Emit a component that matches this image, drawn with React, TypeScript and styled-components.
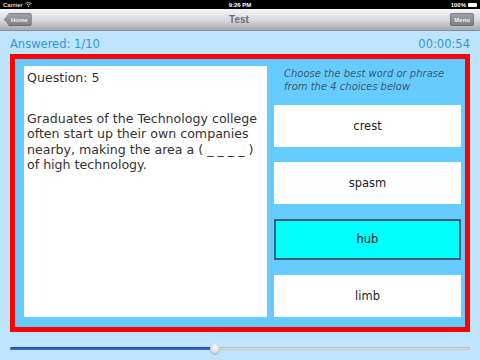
import React from "react";
import styled, { createGlobalStyle } from "styled-components";

const Global = createGlobalStyle`
  html, body { margin: 0; padding: 0; }
  body {
    width: 480px;
    height: 360px;
    overflow: hidden;
    background: #bee5fd;
    font-family: "DejaVu Sans", "Open Sans", sans-serif;
  }
`;

const Screen = styled.div`
  width: 480px;
  height: 360px;
  display: flex;
  flex-direction: column;
  background: #bee5fd;
`;

const StatusBar = styled.div`
  height: 9px;
  background: #000;
  color: #fff;
  font-family: "Liberation Sans", Arial, sans-serif;
  font-size: 6px;
  font-weight: bold;
  display: grid;
  grid-template-columns: 1fr auto 1fr;
  align-items: center;
  padding: 0 3px;
`;

const StatusLeft = styled.div`
  display: flex;
  align-items: center;
  gap: 2px;
  color: #ddd;
`;

const StatusRight = styled.div`
  display: flex;
  justify-content: flex-end;
  align-items: center;
  gap: 2px;
`;

const Battery = styled.span`
  width: 9px;
  height: 4px;
  background: #fff;
  border-radius: 1px;
`;

const NavBar = styled.div`
  height: 21px;
  background: linear-gradient(#f7f7f8, #d6d7db 55%, #a5a8af);
  border-bottom: 1px solid #8a8d94;
  display: grid;
  grid-template-columns: 1fr auto 1fr;
  align-items: center;
  padding: 0 6px 0 4px;
`;

const Title = styled.div`
  font-family: "Liberation Sans", Arial, sans-serif;
  font-size: 10px;
  font-weight: bold;
  color: #6d6f75;
`;

const NavButton = styled.div<{ $back?: boolean }>`
  justify-self: ${(p) => (p.$back ? "start" : "end")};
  height: 13px;
  padding: ${(p) => (p.$back ? "0 4px 0 7px" : "0 4px")};
  display: flex;
  align-items: center;
  font-family: "Liberation Sans", Arial, sans-serif;
  font-size: 6px;
  font-weight: bold;
  color: #f2f2f2;
  background: linear-gradient(#a3a5aa, #7b7e84);
  border-radius: 3px;
  box-shadow: inset 0 0 0 0.5px #5c5f65;
  clip-path: ${(p) =>
    p.$back ? "polygon(5px 0, 100% 0, 100% 100%, 5px 100%, 0 50%)" : "none"};
`;

const InfoRow = styled.div`
  height: 23px;
  padding: 0 10px 3px;
  display: flex;
  justify-content: space-between;
  align-items: flex-end;
  font-family: "DejaVu Sans", sans-serif;
  font-size: 11.5px;
  color: #3092e6;
  box-sizing: border-box;
`;

const Frame = styled.div`
  margin: 0 10px;
  height: 278px;
  box-sizing: border-box;
  border: 5px solid #ff0000;
  background: #66ccff;
  padding: 7px 4px 10px 9px;
  display: grid;
  grid-template-columns: 243px 1fr;
  gap: 7px;
  min-height: 0;
`;

const QuestionCard = styled.div`
  background: #fff;
  padding: 4px 3px;
  color: #333;
  font-size: 12.6px;
  line-height: 15.5px;
  min-height: 0;
`;

const QuestionNo = styled.div`
  margin-bottom: 25px;
`;

const Answers = styled.div`
  display: grid;
  grid-template-rows: 24px repeat(4, 1fr);
  row-gap: 15px;
  min-height: 0;
`;

const Instruction = styled.div`
  font-style: italic;
  font-size: 10px;
  line-height: 13px;
  color: #3d5a70;
  padding: 1px 0 0 10px;
`;

const Choice = styled.div<{ $selected?: boolean }>`
  box-sizing: border-box;
  display: flex;
  align-items: center;
  justify-content: center;
  background: ${(p) => (p.$selected ? "#00ffff" : "#fff")};
  border: ${(p) => (p.$selected ? "2px solid #3f6070" : "none")};
  font-size: 11.5px;
  color: #222;
`;

const SliderRow = styled.div`
  flex: 1;
  padding: 5px 10px 0;
  display: flex;
  align-items: center;
`;

const Track = styled.div`
  position: relative;
  flex: 1;
  height: 3px;
  border-radius: 2px;
  background: linear-gradient(#c9c9c9, #eeeeee);
  box-shadow: inset 0 0 0 0.5px #aaa;
`;

const Fill = styled.div`
  height: 100%;
  border-radius: 2px;
  background: linear-gradient(#1d4aa6, #3f78d0);
`;

const Thumb = styled.div`
  position: absolute;
  top: 50%;
  width: 10px;
  height: 10px;
  margin: -5px 0 0 -5px;
  border-radius: 50%;
  background: radial-gradient(circle at 50% 35%, #ffffff, #d0d0d0 70%, #a8a8a8);
  box-shadow: 0 0.5px 1px rgba(0, 0, 0, 0.4);
`;

const choices = ["crest", "spasm", "hub", "limb"];

export default function App() {
  const progress = 0.445;
  return (
    <>
      <Global />
      <Screen>
        <StatusBar>
          <StatusLeft>
            Carrier
            <svg width="7" height="5" viewBox="0 0 7 5">
              <path d="M0.5 1.6 A4.5 4.5 0 0 1 6.5 1.6" stroke="#ddd" strokeWidth="0.8" fill="none" />
              <path d="M1.7 2.8 A2.8 2.8 0 0 1 5.3 2.8" stroke="#ddd" strokeWidth="0.8" fill="none" />
              <circle cx="3.5" cy="4.2" r="0.7" fill="#ddd" />
            </svg>
          </StatusLeft>
          <span>9:26 PM</span>
          <StatusRight>
            100%
            <Battery />
          </StatusRight>
        </StatusBar>
        <NavBar>
          <NavButton $back>Home</NavButton>
          <Title>Test</Title>
          <NavButton>Menu</NavButton>
        </NavBar>
        <InfoRow>
          <span>Answered: 1/10</span>
          <span>00:00:54</span>
        </InfoRow>
        <Frame>
          <QuestionCard>
            <QuestionNo>Question: 5</QuestionNo>
            Graduates of the Technology college often start up their own companies
            nearby, making the area a ( _ _ _ _ ) of high technology.
          </QuestionCard>
          <Answers>
            <Instruction>
              Choose the best word or phrase from the 4 choices below
            </Instruction>
            {choices.map((c) => (
              <Choice key={c} $selected={c === "hub"}>
                {c}
              </Choice>
            ))}
          </Answers>
        </Frame>
        <SliderRow>
          <Track>
            <Fill style={{ width: `${progress * 100}%` }} />
            <Thumb style={{ left: `${progress * 100}%` }} />
          </Track>
        </SliderRow>
      </Screen>
    </>
  );
}
